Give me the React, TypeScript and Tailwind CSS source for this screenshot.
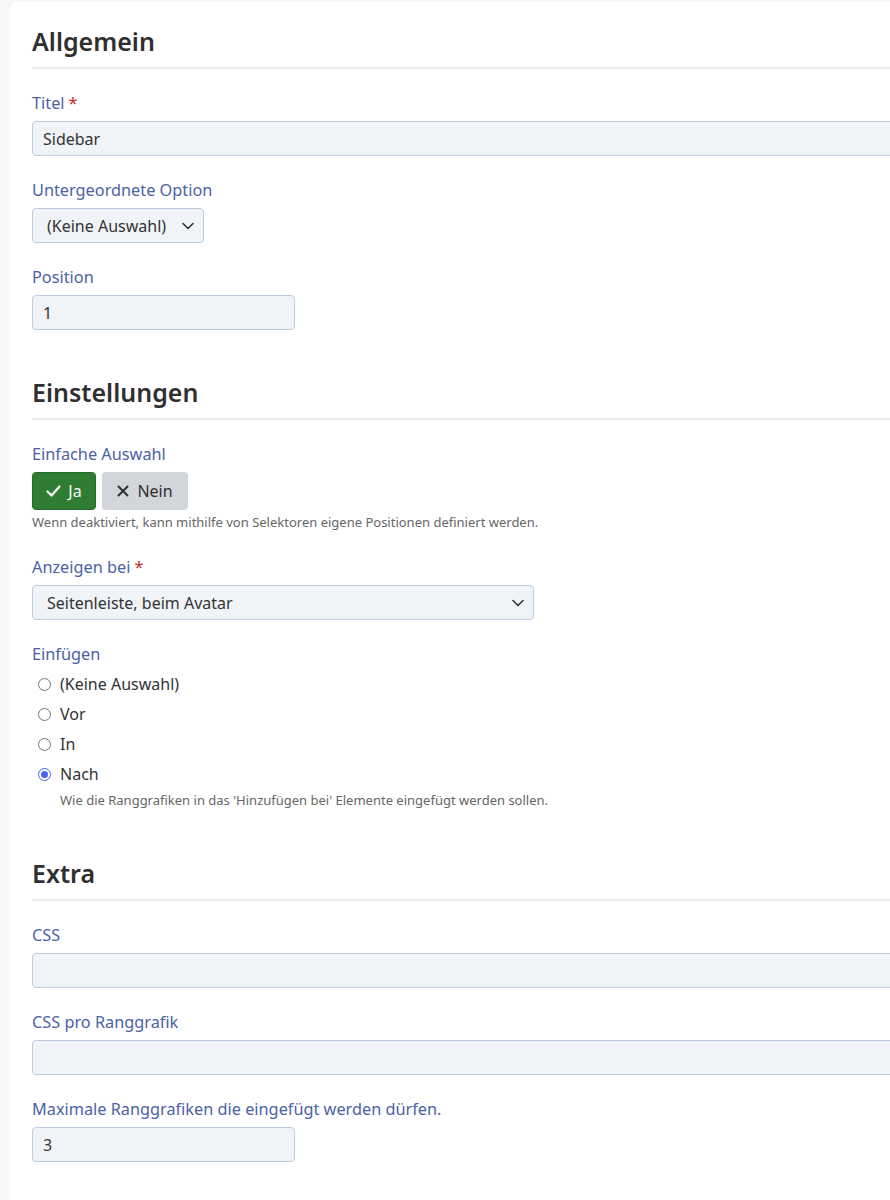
import React from "react";

const font = { fontFamily: '"Noto Sans", "Open Sans", "Liberation Sans", sans-serif' };

function Label({ text, required }: { text: string; required?: boolean }) {
  return (
    <div className="mb-[6px] text-[16.3px] leading-6 text-[#4a62a6]">
      {text}
      {required && <span className="ml-1 text-[#c62828]">*</span>}
    </div>
  );
}

function Chevron() {
  return (
    <svg width="12" height="8" viewBox="0 0 12 8" fill="none">
      <path d="M1 1.5l5 5 5-5" stroke="#333" strokeWidth="1.6" strokeLinecap="round" strokeLinejoin="round" />
    </svg>
  );
}

function TextInput({ value, width }: { value?: string; width?: string }) {
  return (
    <div
      className={`flex h-[35px] items-center rounded-[4px] border border-[#bccbe0] bg-[#f0f4f9] px-[10px] text-[16px] text-[#333] ${width ?? "w-full"}`}
    >
      {value}
    </div>
  );
}

function Select({ value, width }: { value: string; width: string }) {
  return (
    <div
      className={`flex h-[35px] items-center justify-between rounded-[4px] border border-[#bccbe0] bg-[#f0f4f9] pl-[14px] pr-[9px] text-[16px] text-[#333] ${width}`}
    >
      <span>{value}</span>
      <Chevron />
    </div>
  );
}

function Radio({ label, checked }: { label: string; checked?: boolean }) {
  return (
    <div className="flex h-[30px] items-center">
      <span
        className={`ml-[6px] flex h-[13px] w-[13px] items-center justify-center rounded-full border ${
          checked ? "border-[#4a63f0]" : "border-[#767676]"
        }`}
      >
        {checked && <span className="h-[7px] w-[7px] rounded-full bg-[#4a63f0]" />}
      </span>
      <span className="ml-[9px] text-[16px] text-[#333]">{label}</span>
    </div>
  );
}

function Help({ text, indent }: { text: string; indent?: boolean }) {
  return (
    <div className={`mb-[1px] text-[13px] leading-5 text-[#666] ${indent ? "mt-[1px] pl-[28px]" : "mt-[2px]"}`}>
      {text}
    </div>
  );
}

function Section({ title, children }: { title: string; children: React.ReactNode }) {
  return (
    <section>
      <h2 className="mb-[22px] border-b-2 border-[#ececec] pb-[10px] text-[25px] font-semibold leading-[31px] text-[#2f2f2f]">
        {title}
      </h2>
      <div className="flex flex-col gap-[22px]">{children}</div>
    </section>
  );
}

export default function App() {
  return (
    <div className="h-[1200px] w-full overflow-hidden bg-[#f7f7f7] pl-[10px] pt-[2px]" style={font}>
      <div className="h-[1300px] w-[920px] rounded-tl-[6px] bg-white px-[22px] pt-[24px]">
        <div className="flex flex-col gap-[47px]">
          <Section title="Allgemein">
            <div>
              <Label text="Titel" required />
              <TextInput value="Sidebar" />
            </div>
            <div>
              <Label text="Untergeordnete Option" />
              <Select value="(Keine Auswahl)" width="w-[172px]" />
            </div>
            <div>
              <Label text="Position" />
              <TextInput value="1" width="w-[263px]" />
            </div>
          </Section>

          <Section title="Einstellungen">
            <div>
              <Label text="Einfache Auswahl" />
              <div className="flex gap-[6px]">
                <button className="flex h-[38px] w-[64px] items-center justify-center gap-[7px] rounded-[4px] border border-[#276b2b] bg-[#2e7d32] text-[16px] text-white">
                  <svg width="15" height="12" viewBox="0 0 15 12" fill="none">
                    <path d="M1.5 6.5l4 4 8-9" stroke="#fff" strokeWidth="2.2" strokeLinecap="round" strokeLinejoin="round" />
                  </svg>
                  Ja
                </button>
                <button className="flex h-[38px] w-[86px] items-center justify-center gap-[8px] rounded-[4px] bg-[#d2d6db] text-[16px] text-[#2f2f2f]">
                  <svg width="12" height="12" viewBox="0 0 12 12" fill="none">
                    <path d="M1.5 1.5l9 9M10.5 1.5l-9 9" stroke="#2f2f2f" strokeWidth="2" strokeLinecap="round" />
                  </svg>
                  Nein
                </button>
              </div>
              <Help text="Wenn deaktiviert, kann mithilfe von Selektoren eigene Positionen definiert werden." />
            </div>
            <div>
              <Label text="Anzeigen bei" required />
              <Select value="Seitenleiste, beim Avatar" width="w-[502px]" />
            </div>
            <div>
              <div className="mb-[3px] text-[16.3px] leading-6 text-[#4a62a6]">Einfügen</div>
              <Radio label="(Keine Auswahl)" />
              <Radio label="Vor" />
              <Radio label="In" />
              <Radio label="Nach" checked />
              <Help text="Wie die Ranggrafiken in das 'Hinzufügen bei' Elemente eingefügt werden sollen." indent />
            </div>
          </Section>

          <Section title="Extra">
            <div>
              <Label text="CSS" />
              <TextInput />
            </div>
            <div>
              <Label text="CSS pro Ranggrafik" />
              <TextInput />
            </div>
            <div>
              <Label text="Maximale Ranggrafiken die eingefügt werden dürfen." />
              <TextInput value="3" width="w-[263px]" />
            </div>
          </Section>
        </div>
      </div>
    </div>
  );
}
